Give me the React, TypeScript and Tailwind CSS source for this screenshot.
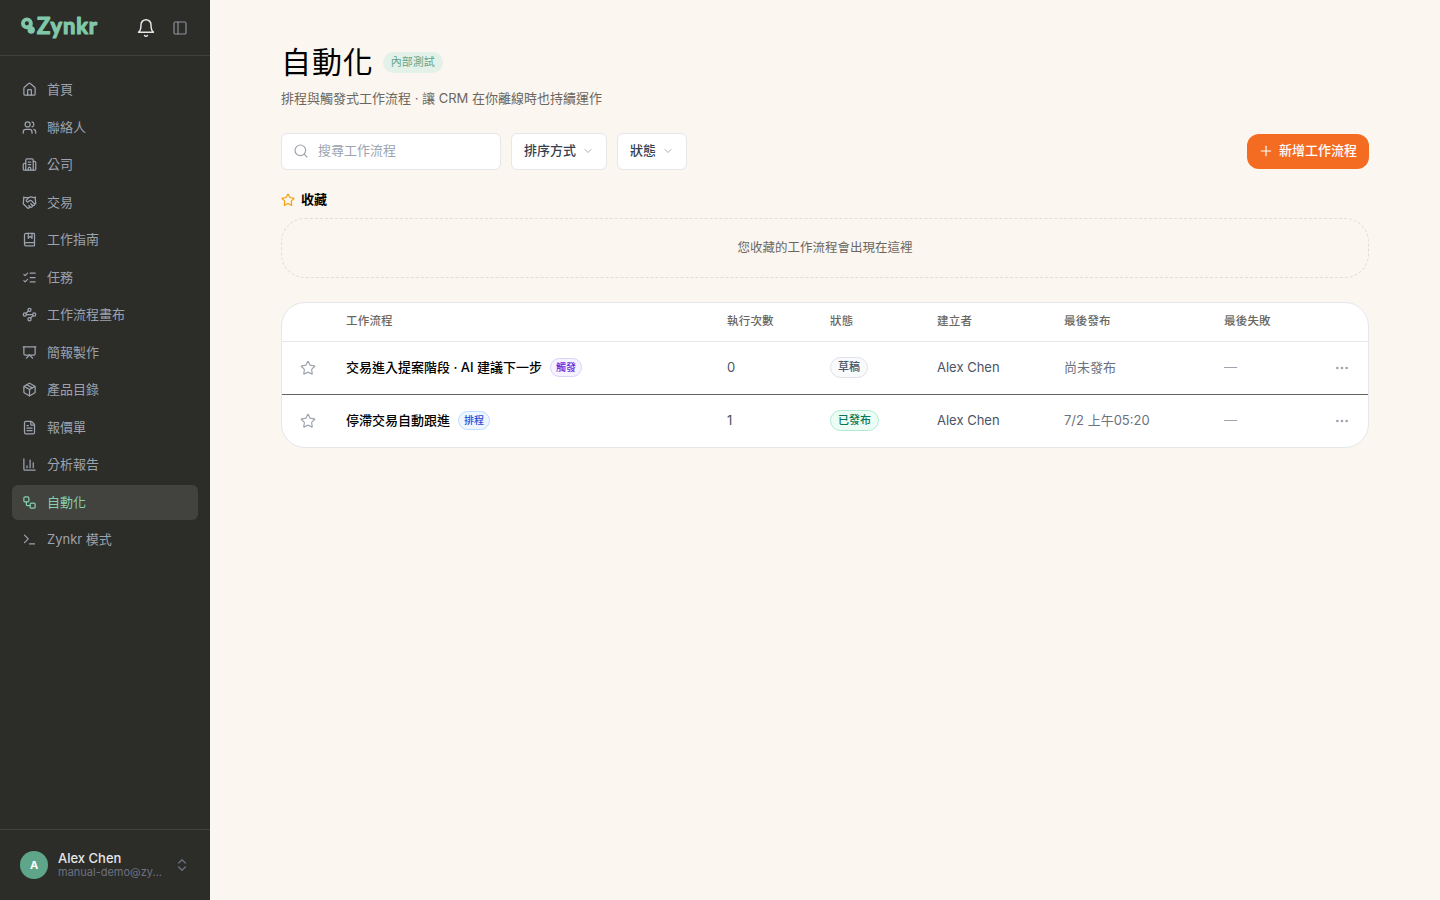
import React from 'react';
import {
  BookMarked,
  Building2,
  ChartColumn,
  ChevronDown,
  ChevronsUpDown,
  Ellipsis,
  FileText,
  Handshake,
  House,
  ListChecks,
  LucideIcon,
  Package,
  PanelLeft,
  Plus,
  Presentation,
  Search,
  Star,
  Terminal,
  Users,
  Waypoints,
  Workflow,
} from 'lucide-react';

type NavItem = {
  label: string;
  icon: LucideIcon;
  active?: boolean;
};

type WorkflowRow = {
  name: string;
  kind: 'trigger' | 'schedule';
  runs: number;
  status: 'draft' | 'published';
  owner: string;
  publishedAt: string;
  failedAt: string;
};

const navItems: NavItem[] = [
  { label: '首頁', icon: House },
  { label: '聯絡人', icon: Users },
  { label: '公司', icon: Building2 },
  { label: '交易', icon: Handshake },
  { label: '工作指南', icon: BookMarked },
  { label: '任務', icon: ListChecks },
  { label: '工作流程畫布', icon: Waypoints },
  { label: '簡報製作', icon: Presentation },
  { label: '產品目錄', icon: Package },
  { label: '報價單', icon: FileText },
  { label: '分析報告', icon: ChartColumn },
  { label: '自動化', icon: Workflow, active: true },
  { label: 'Zynkr 模式', icon: Terminal },
];

const workflows: WorkflowRow[] = [
  {
    name: '交易進入提案階段 · AI 建議下一步',
    kind: 'trigger',
    runs: 0,
    status: 'draft',
    owner: 'Alex Chen',
    publishedAt: '尚未發布',
    failedAt: '—',
  },
  {
    name: '停滯交易自動跟進',
    kind: 'schedule',
    runs: 1,
    status: 'published',
    owner: 'Alex Chen',
    publishedAt: '7/2 上午05:20',
    failedAt: '—',
  },
];

const kinds = {
  trigger: { label: '觸發', className: 'border-[#ddd0fb] bg-[#f5f3ff] text-[#6d28d9]' },
  schedule: { label: '排程', className: 'border-[#bfdbfe] bg-[#eff6ff] text-[#1d4ed8]' },
};

const statuses = {
  draft: { label: '草稿', className: 'border-[#dfe2e7] bg-[#f9fafb] text-[#4b5563]' },
  published: { label: '已發布', className: 'border-[#b0ead2] bg-[#ecfdf5] text-[#047857]' },
};

const Logo = () => (
  <svg width="80" height="32" viewBox="0 0 80 32" className="block overflow-visible text-[#7fc8a9]" fill="currentColor">
    <circle cx="6.9" cy="11.3" r="4" fill="none" stroke="currentColor" strokeWidth="3.8" />
    <path d="M10.6 11.3v7" stroke="currentColor" strokeWidth="3.4" />
    <circle cx="11.2" cy="18" r="3.7" />
    <text
      x="17"
      y="21.9"
      textLength="60"
      lengthAdjust="spacing"
      stroke="currentColor"
      strokeWidth="1.2"
      strokeLinejoin="round"
      className="font-['Lato'] text-[22px] font-bold"
    >
      Zynkr
    </text>
  </svg>
);

const BellIcon = () => (
  <svg
    viewBox="0 0 24 24"
    fill="none"
    stroke="currentColor"
    strokeWidth="1.75"
    strokeLinecap="round"
    strokeLinejoin="round"
    className="size-5 text-[#e5e7eb]"
  >
    <path d="M6 8a6 6 0 0 1 12 0c0 7 3 9 3 9H3s3-2 3-9" />
    <path d="M10.3 21a1.94 1.94 0 0 0 3.4 0" />
  </svg>
);

const Sidebar = () => (
  <aside className="flex w-[210px] shrink-0 flex-col bg-[#2c2c28]">
    <div className="flex h-14 items-center border-b border-[#40403c] pl-5 pr-[22px]">
      <Logo />
      <div className="ml-auto flex items-center gap-4">
        <BellIcon />
        <PanelLeft className="size-4 text-[#8b919c]" strokeWidth={1.75} />
      </div>
    </div>

    <nav className="flex flex-1 flex-col gap-0.5 px-3 pt-4">
      {navItems.map(({ label, icon: Icon, active }) => (
        <a
          key={label}
          href="#"
          className={`flex items-center gap-2.5 rounded-md px-2.5 py-2 text-[13px] leading-[19.5px] ${
            active ? 'bg-[#42423e] text-[#86cfae]' : 'text-[#9ca3af]'
          }`}
        >
          <Icon className="size-[15px]" strokeWidth={2} />
          {label}
        </a>
      ))}
    </nav>

    <div className="flex h-[71px] items-center border-t border-[#40403c] px-5">
      <div className="flex size-7 shrink-0 items-center justify-center rounded-full bg-[#5fa58a] text-[11px] font-bold text-white">
        A
      </div>
      <div className="ml-2.5 w-[106px] pb-0.5">
        <p className="text-[13px] font-medium leading-4 text-[#e5e7eb]">Alex Chen</p>
        <p className="truncate text-[11px] leading-[13px] text-[#6b7280]">manual-demo@zy...</p>
      </div>
      <ChevronsUpDown className="ml-auto size-4 text-[#6b7280]" strokeWidth={2} />
    </div>
  </aside>
);

const FilterButton = ({ label }: { label: string }) => (
  <button className="flex h-[37px] items-center gap-1.5 rounded-md border border-[#e5e7eb] bg-white px-3 pb-px text-[13px] font-medium text-[#374151]">
    {label}
    <ChevronDown className="size-3 text-[#a6adb8]" strokeWidth={2} />
  </button>
);

const cols = 'grid grid-cols-[64px_381px_103px_107px_127px_160px_1fr_64px] items-center';

const App = () => {
  return (
    <div className="flex h-screen overflow-hidden bg-[#fbf6ef] font-['Inter','Noto_Sans_CJK_TC',sans-serif] text-black">
      <Sidebar />

      <main className="flex-1">
        <div className="mx-auto max-w-6xl px-8 pt-10">
          <div className="flex items-center gap-[9px]">
            <h1 className="text-[30px] leading-[45px] tracking-[0.9px]">自動化</h1>
            <span className="rounded-full bg-[#e4f1e9] px-2 text-[11px] leading-[21px] text-[#5fa58a]">
              內部測試
            </span>
          </div>
          <p className="mt-[3px] text-[13px] leading-5 text-[#6b675f]">
            排程與觸發式工作流程 · 讓 CRM 在你離線時也持續運作
          </p>

          <div className="mt-[25px] flex items-center gap-2.5">
            <div className="flex h-[37px] w-[220px] items-center gap-[9px] rounded-md border border-[#e5e7eb] bg-white pb-px pl-[11px] pr-3">
              <Search className="size-4 shrink-0 text-[#9ca3af]" strokeWidth={1.75} />
              <input
                className="w-full text-[13px] outline-none placeholder:text-[#9ca3af]"
                placeholder="搜尋工作流程"
              />
            </div>
            <FilterButton label="排序方式" />
            <FilterButton label="狀態" />
            <button className="ml-auto flex h-[35px] items-center gap-[5px] rounded-xl bg-[#f36c21] pb-px pl-[11px] pr-3 text-[13px] font-medium text-white">
              <Plus className="size-4" strokeWidth={1.75} />
              新增工作流程
            </button>
          </div>

          <div className="mt-5 flex items-center gap-1.5">
            <Star className="size-3.5 text-[#f59e0b]" strokeWidth={2} />
            <h2 className="pb-0.5 text-[13px] font-semibold leading-[18px]">收藏</h2>
          </div>
          <div className="mt-2 flex h-[60px] items-center justify-center rounded-3xl border border-dashed border-[#e2ddd5] text-[12.5px] text-[#6b675f]">
            您收藏的工作流程會出現在這裡
          </div>

          <div className="mt-6 overflow-hidden rounded-3xl border border-[#e5e7eb] bg-white">
            <div
              className={`${cols} h-[39px] border-b border-[#e5e7eb] text-[11.5px] font-medium tracking-[0.2px] text-[#6b675f]`}
            >
              <span />
              <span>工作流程</span>
              <span>執行次數</span>
              <span>狀態</span>
              <span>建立者</span>
              <span>最後發布</span>
              <span>最後失敗</span>
            </div>
            {workflows.map((row) => (
              <div
                key={row.name}
                className={`${cols} h-[53px] border-b border-[#63635f] pb-px text-[13px] text-[#6b7280] last:h-[52px] last:border-b-0`}
              >
                <Star className="ml-[18px] mt-px size-4 text-[#9ca3af]" strokeWidth={1.75} />
                <div className="flex items-center gap-2">
                  <span className="font-medium text-black">{row.name}</span>
                  <span
                    className={`rounded-full border px-[5px] text-[10px] font-medium leading-[17px] ${kinds[row.kind].className}`}
                  >
                    {kinds[row.kind].label}
                  </span>
                </div>
                <span className="text-[#4b5563]">{row.runs}</span>
                <span
                  className={`justify-self-start rounded-full border px-[7px] text-[11px] font-medium leading-[19px] ${statuses[row.status].className}`}
                >
                  {statuses[row.status].label}
                </span>
                <span className="text-[#4b5563]">{row.owner}</span>
                <span>{row.publishedAt}</span>
                <span className="text-[#9ca3af]">{row.failedAt}</span>
                <Ellipsis className="mr-[18px] mt-px size-4 justify-self-end text-[#9ca3af]" />
              </div>
            ))}
          </div>
        </div>
      </main>
    </div>
  );
};

export default App;
